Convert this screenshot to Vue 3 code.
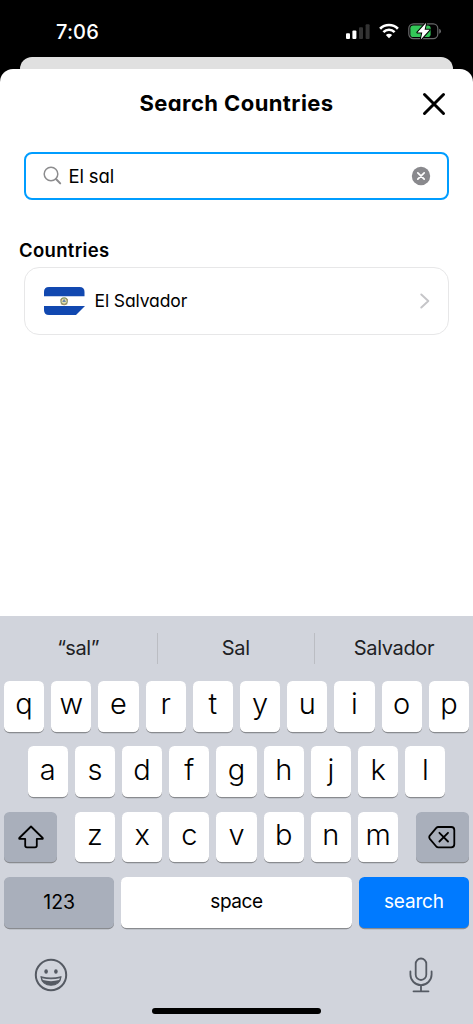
<script setup>
const topRow = [...'qwertyuiop']
const homeRow = [...'asdfghjkl']
const bottomRow = [...'zxcvbnm']
</script>

<template>
  <main class="phone">
    <header class="status">
      <span class="time">7:06</span>
      <div class="indicators">
        <svg class="signal" width="24" height="16" viewBox="0 0 24 16">
          <rect x="0" y="9.3" width="4" height="5.7" rx="1" fill="#fff" />
          <rect x="6.4" y="6.5" width="4" height="8.5" rx="1" fill="#fff" />
          <rect x="13" y="3.3" width="4" height="11.7" rx="1" fill="#333" />
          <rect x="19.6" y="0.2" width="4" height="14.8" rx="1" fill="#333" />
        </svg>
        <svg class="wifi" width="20" height="16" viewBox="0 0 20 16" fill="none" stroke="#fff">
          <path d="M1.1 5.7A12.6 12.6 0 0 1 18.9 5.7" stroke-width="2.7" />
          <path d="M4.4 9.1A7.9 7.9 0 0 1 15.6 9.1" stroke-width="2.6" />
          <path d="M10 15.2 6.8 12Q10 9.5 13.2 12Z" fill="#fff" stroke="none" />
        </svg>
        <svg class="battery" width="34" height="18" viewBox="0 0 34 18">
          <rect x="0.8" y="1.8" width="29" height="14.8" rx="4.6" fill="none" stroke="#68686a" stroke-width="1.2" />
          <path d="M31.2 6.8Q33 7.5 33 9.2T31.2 11.7Z" fill="#68686a" />
          <rect x="2.4" y="3.4" width="20.2" height="11.6" rx="2.8" fill="#34c759" />
          <path d="M18.2 .8 9.4 10.4H14.3L12.8 17.6 21.6 7.8H16.6Z" fill="#fff" stroke="#000" stroke-width="2" stroke-linejoin="round" paint-order="stroke" />
        </svg>
      </div>
    </header>
    <div class="behind"></div>

    <section class="sheet">
      <div class="heading">
        <h1><span>Search Countries</span></h1>
        <svg class="close" width="24" height="24" viewBox="0 0 24 24"><path d="M2.5 2.5 21.5 21.5M21.5 2.5 2.5 21.5" stroke="#000" stroke-width="3" stroke-linecap="round" /></svg>
      </div>
      <div class="search">
        <svg class="lens" width="20" height="20" viewBox="0 0 20 20" fill="none" stroke="#8c8c8e" stroke-linecap="round">
          <circle cx="8" cy="8" r="6.8" stroke-width="1.5" /><path d="M13 13 17.2 17.4" stroke-width="2" />
        </svg>
        <span class="query">El sal</span>
        <svg class="clear" width="20" height="20" viewBox="0 0 20 20"><circle cx="10" cy="10" r="9.2" fill="#89898d" /><path d="M6.8 6.8 13.2 13.2M13.2 6.8 6.8 13.2" stroke="#fff" stroke-width="1.7" stroke-linecap="round" /></svg>
      </div>
      <h2>Countries</h2>
      <div class="country">
        <svg class="flag" width="41" height="28" viewBox="0 0 41 28">
          <path d="M5 0H35.5Q40.5 0 40.5 5V19.5L32 28H5Q0 28 0 23V5Q0 0 5 0Z" fill="#1148b0" />
          <path d="M0 9.2H41V19H0Z" fill="#fff" />
          <circle cx="20.1" cy="14.1" r="3.2" fill="#e7dfac" stroke="#849365" stroke-width="1.1" />
          <path d="M18.2 15 20.1 11.8 22 15Z" fill="#6988a8" />
          <path d="M16.8 16.8Q20.1 19 23.4 16.8" fill="none" stroke="#9a8354" stroke-width=".8" />
          <path d="M16.5 12.8h1.3M22.6 12.8h1.3" stroke="#a98262" stroke-width="1" />
        </svg>
        <span class="name">El Salvador</span>
        <svg class="chevron" width="10" height="16" viewBox="0 0 10 16"><path d="M1.3 1.5 8.3 8 1.3 14.5" fill="none" stroke="#c5c5c8" stroke-width="1.9" stroke-linecap="round" stroke-linejoin="round" /></svg>
      </div>
    </section>

    <section class="keyboard">
      <div class="suggestions"><span>“sal”</span><span>Sal</span><span>Salvador</span></div>
      <div class="rows">
        <div class="row"><div v-for="key in topRow" :key="key" class="key">{{ key }}</div></div>
        <div class="row"><div v-for="key in homeRow" :key="key" class="key">{{ key }}</div></div>
        <div class="row spread">
          <div class="key special">
            <svg width="28" height="26" viewBox="0 0 28 26"><path d="M14 2.5 25.7 14Q26.2 14.9 25.1 14.9H19.8V21.5Q19.8 23.3 18 23.3H10Q8.2 23.3 8.2 21.5V14.9H2.9Q1.8 14.9 2.3 14Z" fill="none" stroke="#000" stroke-width="1.8" stroke-linejoin="round" /></svg>
          </div>
          <div class="letters"><div v-for="key in bottomRow" :key="key" class="key">{{ key }}</div></div>
          <div class="key special">
            <svg width="28" height="26" viewBox="0 0 28 26" fill="none" stroke="#000" stroke-width="1.8" stroke-linejoin="round" stroke-linecap="round"><path d="M10.2 3H23.2Q26.3 3 26.3 6V20.3Q26.3 23.3 23.2 23.3H10.2Q9.1 23.3 8.3 22.5L1.8 14.8Q.7 13.2 1.8 11.6L8.3 3.8Q9.1 3 10.2 3ZM11.4 8.8 20 17.5M20 8.8 11.4 17.5" /></svg>
          </div>
        </div>
        <div class="row">
          <div class="key special wide">123</div>
          <div class="key space">space</div>
          <div class="key action wide">search</div>
        </div>
      </div>
      <div class="tools">
        <svg width="34" height="34" viewBox="0 0 34 34" fill="none" stroke="#555a63">
          <circle cx="17" cy="17" r="15.2" stroke-width="2" />
          <ellipse cx="12.1" cy="13.5" rx="1.8" ry="2.2" fill="#555a63" stroke="none" />
          <ellipse cx="21.9" cy="13.5" rx="1.8" ry="2.2" fill="#555a63" stroke="none" />
          <path d="M7 18.7Q17 21.7 27 18.7C26.5 24.3 22.3 27.2 17 27.2S7.5 24.3 7 18.7Z" fill="#555a63" stroke-width="1.2" stroke-linejoin="round" />
          <path d="M8 20.2Q17 22.4 26 20.2L25.1 22.1Q17 24.2 8.9 22.1Z" fill="#d1d4dc" stroke="none" />
        </svg>
        <svg width="24" height="36" viewBox="0 0 24 36" fill="none" stroke="#555a63" stroke-width="1.8" stroke-linecap="round">
          <rect x="6.7" y="1.5" width="10.6" height="21.5" rx="5.3" /><path d="M1.4 14.5V17.5A10.6 10.6 0 0 0 22.6 17.5V14.5M12 28.4V34M4.5 34.3H19.5" />
        </svg>
      </div>
      <div class="home"></div>
    </section>
  </main>
</template>

<style>
body { background: #000; }
</style>

<style scoped>
.phone { box-sizing: border-box; width: 473px; height: 1024px; overflow: hidden; display: flex; flex-direction: column; background: #000; color: #000; font-family: Inter, "Liberation Sans", sans-serif; }
.status { height: 57px; flex: none; display: flex; justify-content: space-between; align-items: flex-start; }
.time { margin: 19px 0 0 56px; color: #fff; font-size: 20px; font-weight: 550; line-height: 26px; letter-spacing: .15px; }
.indicators { display: flex; margin: 22px 31px 0 0; }
.signal { margin: 2px 9px 0 0; }
.wifi { margin: 1px 9px 0 0; }
.battery { flex: none; }
.behind { height: 24px; flex: none; margin: 0 20px -12px; background: #e0e0e0; border-radius: 12px 12px 0 0; }
.sheet { position: relative; height: 547px; flex: none; background: #fff; border-radius: 13px 13px 0 0; font-feature-settings: "cv11"; }
.heading { height: 83px; display: flex; justify-content: space-between; align-items: flex-start; padding: 0 27px 0 51px; box-sizing: border-box; }
h1 { margin: 18px 0 0; flex: 1; text-align: center; font-size: 22px; line-height: 32px; font-weight: 700; letter-spacing: .42px; white-space: nowrap; }
.close { margin-top: 23px; }
.search { box-sizing: border-box; margin: 0 24px; height: 48px; border: 2.5px solid #009dff; border-radius: 8px; display: flex; align-items: center; padding: 0 16px 0 16.5px; }
.lens { margin-right: 6px; }
.query { flex: 1; font-size: 18.5px; line-height: 28px; letter-spacing: -.15px; }
h2 { margin: 35px 0 0 19px; font-size: 18.5px; line-height: 31px; font-weight: 600; letter-spacing: .32px; }
.country { box-sizing: border-box; margin: 1px 24px 0; height: 68px; border: 1.3px solid #e7e7e8; border-radius: 15px; display: flex; align-items: center; padding: 0 18px 0 19px; }
.flag { margin-right: 9.5px; }
.name { flex: 1; font-size: 17.5px; line-height: 26px; letter-spacing: -.12px; }
.keyboard { height: 408px; flex: none; background: #d1d4dc; }
.suggestions { height: 65px; display: grid; grid-template-columns: 156.5px 157.5px 159px; align-items: center; text-align: center; font-size: 20px; line-height: 31px; letter-spacing: -.35px; color: #202124; }
.suggestions span + span { border-left: 1px solid #bbbdc3; }
.rows { display: flex; flex-direction: column; gap: 14.4px; padding: 0 3.9px; }
.row { height: 51px; display: flex; gap: 7.03px; justify-content: center; }
.key { box-sizing: border-box; width: 40.2px; height: 50.5px; flex: none; display: flex; align-items: center; justify-content: center; padding-bottom: 4px; border-radius: 5.5px; background: #fff; box-shadow: 0 1.2px 0 #898b8f; font-size: 29px; line-height: 36px; font-weight: 350; }
.spread { justify-content: space-between; }
.letters { display: flex; gap: 7.03px; }
.special { width: 53.3px; padding: 0; background: #a9afbb; }
.row .wide { width: 110.5px; font-size: 19.5px; font-weight: 400; letter-spacing: -.1px; }
.row .space { width: auto; flex: 1; padding-bottom: 1px; font-size: 19px; font-weight: 400; letter-spacing: -.4px; }
.row .action { padding-bottom: 1px; background: #007aff; color: #fff; font-size: 19px; letter-spacing: -.2px; }
.tools { height: 72px; display: flex; justify-content: space-between; align-items: center; padding: 22.5px 40px 0 34px; box-sizing: border-box; }
.home { width: 169px; height: 6px; margin: 8px auto 0; border-radius: 3px; background: #000; }
</style>
